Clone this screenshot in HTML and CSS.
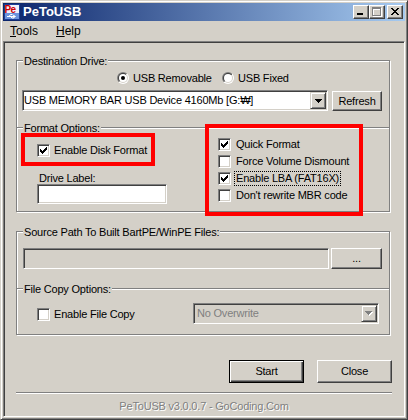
FILE: index.html
```html
<!DOCTYPE html>
<html>
<head>
<meta charset="utf-8">
<title>PeToUSB</title>
<link rel="stylesheet" href="styles.css">
</head>
<body>
<div class="window">
  <div class="titlebar">
    <svg class="appicon" width="16" height="16" viewBox="0 0 16 16">
      <rect x="0" y="0" width="16" height="16" fill="#1d3f96"/>
      <rect x="1" y="1" width="14" height="14" fill="#6b93dc"/>
      <rect x="1" y="1" width="14" height="8" fill="#eef2fb"/>
      <text x="0.5" y="8.6" font-family="Liberation Sans" font-weight="bold" font-size="10" fill="#d00000" letter-spacing="-0.6">Pe</text>
      <path d="M3 12.5h8M9 11l2.5 1.5L9 14M5 12.5l1.5-2h2M6.5 12.5l1.5 1.5h1.5" stroke="#fff" stroke-width="1" fill="none"/>
    </svg>
    <span class="title">PeToUSB</span>
    <div class="capbtns">
      <span class="capbtn"><svg width="14" height="12" viewBox="0 0 14 12"><rect x="3" y="7" width="6" height="2" fill="#000"/></svg></span>
      <span class="capbtn"><svg width="14" height="12" viewBox="0 0 14 12"><path d="M3 2h9v9h-9z M4 4v6h7v-6z" fill="#fff" fill-rule="evenodd"/><path d="M2 1h9v9h-9z M3 3v6h7v-6z" fill="#808080" fill-rule="evenodd"/></svg></span>
      <span class="capbtn close"><svg width="14" height="12" viewBox="0 0 14 12"><path d="M3 2h2v1h-2z M9 2h2v1h-2z M4 3h2v1h-2z M8 3h2v1h-2z M5 4h4v1h-4z M6 5h2v1h-2z M5 6h4v1h-4z M4 7h2v1h-2z M8 7h2v1h-2z M3 8h2v1h-2z M9 8h2v1h-2z" fill="#000"/></svg></span>
    </div>
  </div>
  <div class="menubar">
    <span class="menuitem tools"><u>T</u>ools</span>
    <span class="menuitem"><u>H</u>elp</span>
  </div>
  <div class="client">
    <div class="group dest">
      <span class="legend">Destination Drive:</span>
      <div class="radios">
        <div class="radio first">
          <svg class="rb" width="12" height="12" viewBox="0 0 12 12">
            <defs>
              <linearGradient id="rgOuter" x1="0" y1="0" x2="1" y2="1"><stop offset="0.5" stop-color="#808080"/><stop offset="0.5" stop-color="#ffffff"/></linearGradient>
              <linearGradient id="rgInner" x1="0" y1="0" x2="1" y2="1"><stop offset="0.5" stop-color="#404040"/><stop offset="0.5" stop-color="#d4d0c8"/></linearGradient>
            </defs>
            <circle cx="6" cy="6" r="6" fill="url(#rgOuter)"/>
            <circle cx="6" cy="6" r="5" fill="url(#rgInner)"/>
            <circle cx="6" cy="6" r="4" fill="#fff"/>
            <circle cx="6" cy="6" r="2" fill="#000"/>
          </svg>USB Removable
        </div>
        <div class="radio">
          <svg class="rb" width="12" height="12" viewBox="0 0 12 12">
            <circle cx="6" cy="6" r="6" fill="url(#rgOuter)"/>
            <circle cx="6" cy="6" r="5" fill="url(#rgInner)"/>
            <circle cx="6" cy="6" r="4" fill="#fff"/>
          </svg>USB Fixed
        </div>
      </div>
      <div class="driverow">
        <div class="combo drive">
          <span class="ctext">USB MEMORY BAR USB Device 4160Mb [G:₩]</span>
          <span class="dd"><svg width="7" height="4" viewBox="0 0 7 4"><path d="M0 0h7v1h-1v1h-1v1h-1v1h-1v-1h-1v-1h-1v-1h-1z" fill="#000"/></svg></span>
        </div>
        <button class="btn refresh">Refresh</button>
      </div>
      <div class="sub fmt">
        <span class="legend">Format Options:</span>
        <div class="fmtgrid">
          <div class="fmtleft">
            <div class="chk">
              <span class="cb"><svg width="11" height="11" viewBox="1 1 11 11"><path d="M9 3h1v1h-1z M8 4h2v1h-2z M3 5h1v1h-1z M7 5h3v1h-3z M3 6h2v1h-2z M6 6h3v1h-3z M3 7h5v1h-5z M4 8h3v1h-3z M5 9h1v1h-1z" fill="#000"/></svg></span>
              <span class="ct">Enable Disk Format</span>
            </div>
            <div class="lbl">Drive Label:</div>
            <div class="edit dlabel"></div>
          </div>
          <div class="fmtright">
            <div class="chk r">
              <span class="cb"><svg width="11" height="11" viewBox="1 1 11 11"><path d="M9 3h1v1h-1z M8 4h2v1h-2z M3 5h1v1h-1z M7 5h3v1h-3z M3 6h2v1h-2z M6 6h3v1h-3z M3 7h5v1h-5z M4 8h3v1h-3z M5 9h1v1h-1z" fill="#000"/></svg></span>
              <span class="ct">Quick Format</span>
            </div>
            <div class="chk r">
              <span class="cb"></span>
              <span class="ct">Force Volume Dismount</span>
            </div>
            <div class="chk r">
              <span class="cb"><svg width="11" height="11" viewBox="1 1 11 11"><path d="M9 3h1v1h-1z M8 4h2v1h-2z M3 5h1v1h-1z M7 5h3v1h-3z M3 6h2v1h-2z M6 6h3v1h-3z M3 7h5v1h-5z M4 8h3v1h-3z M5 9h1v1h-1z" fill="#000"/></svg></span>
              <span class="ct focus">Enable LBA (FAT16X)</span>
            </div>
            <div class="chk r">
              <span class="cb"></span>
              <span class="ct">Don't rewrite MBR code</span>
            </div>
          </div>
        </div>
      </div>
    </div>

    <div class="group source">
      <span class="legend">Source Path To Built BartPE/WinPE Files:</span>
      <div class="pathrow">
        <div class="edit pathedit"></div>
        <button class="btn browse">...</button>
      </div>
      <div class="sub copy">
        <span class="legend">File Copy Options:</span>
        <div class="copyrow">
          <div class="chk copychk">
            <span class="cb"></span>
            <span class="ct">Enable File Copy</span>
          </div>
          <div class="combo dis">
            <span class="ctext">No Overwrite</span>
            <span class="dd"><svg width="8" height="5" viewBox="0 0 8 5"><path d="M1 1h7v1h-1v1h-1v1h-1v1h-1v-1h-1v-1h-1v-1h-1z" fill="#fff"/><path d="M0 0h7v1h-1v1h-1v1h-1v1h-1v-1h-1v-1h-1v-1h-1z" fill="#808080"/></svg></span>
          </div>
        </div>
      </div>
    </div>

    <div class="buttons">
      <button class="btn default">Start</button>
      <button class="btn">Close</button>
    </div>
    <div class="sep"></div>
    <div class="footer">PeToUSB v3.0.0.7 - GoCoding.Com</div>

    <div class="mark m1"></div>
    <div class="mark m2"></div>
  </div>
</div>
</body>
</html>
```

FILE: styles.css
```css
* { box-sizing: border-box; margin: 0; padding: 0; }
html, body { width: 408px; height: 420px; overflow: hidden; background: #d4d0c8; }
body {
  font-family: "Liberation Sans", Arial, sans-serif;
  font-size: 11px;
  line-height: 13px;
  letter-spacing: -0.2px;
  color: #000;
}

.window {
  width: 408px;
  height: 420px;
  display: flex;
  flex-direction: column;
  padding: 2px;
  background: #d4d0c8;
  border: 1px solid;
  border-color: #d4d0c8 #404040 #404040 #d4d0c8;
  box-shadow: inset 1px 1px #fff, inset -1px -1px #808080;
}

/* title bar */
.titlebar {
  flex: none;
  height: 18px;
  display: flex;
  align-items: center;
  padding: 0 2px 0 1px;
  background: linear-gradient(to right, #0a246a, #a6caf0);
}
.appicon { flex: none; display: block; }
.title {
  margin-left: 3px;
  color: #fff;
  font-weight: bold;
  font-size: 13px;
  line-height: 18px;
  letter-spacing: 0;
}
.capbtns { margin-left: auto; display: flex; }
.capbtn {
  width: 16px;
  height: 14px;
  background: #d4d0c8;
  border: 1px solid;
  border-color: #fff #404040 #404040 #fff;
  box-shadow: inset -1px -1px #808080;
}
.capbtn svg { display: block; }
.capbtn.close { margin-left: 2px; }

/* menu */
.menubar {
  flex: none;
  height: 20px;
  display: flex;
  align-items: center;
  padding-left: 7px;
  font-size: 12px;
  line-height: normal;
  letter-spacing: 0;
}
.menuitem.tools { width: 46px; }

/* client */
.client {
  flex: 1;
  position: relative;
  padding: 18px 14px 0 12px;
  border: 1px solid;
  border-color: #808080 #fff #fff #808080;
  box-shadow: inset 1px 1px #404040;
}

.group {
  position: relative;
  border: 1px solid #808080;
  box-shadow: inset 1px 1px #fff, 1px 1px #fff;
}
.legend {
  position: absolute;
  top: -6px;
  left: 6px;
  padding: 0 1px;
  background: #d4d0c8;
  line-height: 13px;
  white-space: nowrap;
}
.sub {
  position: relative;
  border-top: 1px solid #808080;
  box-shadow: inset 0 1px #fff;
}

/* destination */
.dest { height: 152px; padding-top: 11px; }
.radios {
  display: flex;
  align-items: center;
  height: 12px;
  line-height: 12px;
  padding-left: 100px;
}
.radio { display: flex; align-items: center; white-space: nowrap; }
.radio.first { width: 105px; }
.rb { flex: none; display: block; margin-right: 4px; }

.driverow { display: flex; margin-top: 6px; padding-left: 5px; }
.combo {
  display: flex;
  align-items: center;
  height: 21px;
  padding: 1px;
  background: #fff;
  border: 1px solid;
  border-color: #808080 #fff #fff #808080;
  box-shadow: inset 1px 1px #404040, inset -1px -1px #d4d0c8;
}
.combo.drive { width: 306px; }
.ctext { flex: 1; white-space: nowrap; overflow: hidden; }
.dd {
  flex: none;
  width: 16px;
  height: 17px;
  display: flex;
  align-items: center;
  justify-content: center;
  background: #d4d0c8;
  border: 1px solid;
  border-color: #d4d0c8 #404040 #404040 #d4d0c8;
  box-shadow: inset 1px 1px #fff, inset -1px -1px #808080;
}
.dd svg { display: block; }

.btn {
  flex: none;
  display: flex;
  align-items: center;
  justify-content: center;
  width: 75px;
  height: 23px;
  background: #d4d0c8;
  border: 1px solid;
  border-color: #fff #404040 #404040 #fff;
  box-shadow: inset -1px -1px #808080;
  font: inherit;
  letter-spacing: inherit;
  color: #000;
}
.btn.default {
  border-color: #000;
  box-shadow: inset 1px 1px #fff, inset -1px -1px #404040, inset -2px -2px #808080;
}
.refresh { width: 50px; height: 20px; margin: 1px 0 0 4px; }

/* format options */
.fmt { margin-top: 16px; }
.fmtgrid {
  display: grid;
  grid-template-columns: 181px 1fr;
  padding-left: 20px;
}
.fmtleft { padding-top: 16px; }
.fmtright { padding-top: 8px; }
.chk { display: flex; align-items: center; height: 13px; white-space: nowrap; }
.chk.r { height: 17px; }
.cb {
  flex: none;
  width: 13px;
  height: 13px;
  background: #fff;
  border: 1px solid;
  border-color: #808080 #fff #fff #808080;
  box-shadow: inset 1px 1px #404040, inset -1px -1px #d4d0c8;
}
.cb svg { display: block; }
.ct { margin-left: 4px; }
.chk.r .ct {
  margin-left: 3px;
  padding: 0 1px;
  border: 1px dotted transparent;
  line-height: 13px;
}
.chk.r .ct.focus { border-color: #000; }
.lbl { margin: 15px 0 0 2px; line-height: 12px; }
.edit {
  background: #fff;
  border: 1px solid;
  border-color: #808080 #fff #fff #808080;
  box-shadow: inset 1px 1px #404040, inset -1px -1px #d4d0c8;
}
.dlabel { width: 130px; height: 20px; }

/* source path */
.source { margin-top: 19px; height: 104px; padding-top: 16px; }
.pathrow { display: flex; padding-left: 6px; }
.pathedit { width: 306px; height: 21px; background: #d4d0c8; }
.browse { width: 51px; height: 21px; margin-left: 2px; }
.copy { margin-top: 19px; }
.copyrow { display: flex; align-items: center; padding: 14px 0 0 20px; }
.copychk { width: 156px; margin-top: 2px; }
.combo.dis { width: 186px; background: #d4d0c8; }
.combo.dis .ctext { color: #808080; padding-left: 2px; }

/* bottom */
.buttons {
  display: flex;
  justify-content: flex-end;
  gap: 13px;
  margin: 25px -2px 0 0;
}
.sep {
  height: 2px;
  margin: 9px -2px 0 0;
  border-top: 1px solid #808080;
  border-bottom: 1px solid #fff;
}
.footer {
  margin: 6px -2px 0 0;
  text-align: center;
  color: #808080;
  text-shadow: 1px 1px #fff;
  line-height: 13px;
}

/* red annotation boxes */
.mark { position: absolute; border: 4px solid #ff0000; }
.m1 { left: 17px; top: 91px; width: 134px; height: 33px; }
.m2 { left: 201px; top: 82px; width: 158px; height: 92px; }
```
